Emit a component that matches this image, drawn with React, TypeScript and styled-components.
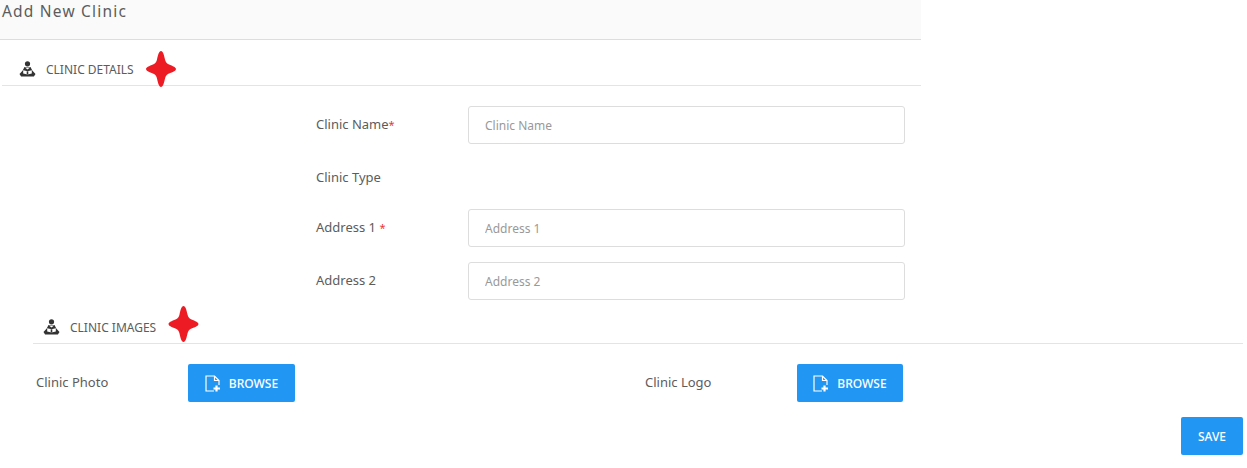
import styled, { createGlobalStyle } from "styled-components";

const GlobalStyle = createGlobalStyle`
  html, body {
    margin: 0;
    padding: 0;
    background: #fff;
  }
  body {
    font-family: "Noto Sans", "Open Sans", sans-serif;
    color: #5c5c5c;
  }
`;

function ReaderIcon() {
  return (
    <svg width="17" height="16" viewBox="0 0 17 16" fill="#333">
      <circle cx="8.500" cy="2.800" r="2.600" />
      <path d="M5.500 6h6l1.800 3.600 3.200 3.400-1.600 2.500H2.100L.5 13l3.200-3.400z" />
      <path d="M4.200 9.300l4.300 1 4.300-1v3.300l-4.300 1-4.300-1z" fill="#fff" />
      <path d="M7.700 10.300h1.600v3.200H7.700z" />
      <path d="M6 6.500l2.500 2 2.500-2z" fill="#fff" />
    </svg>
  );
}

function SparkMark({ width }: { width: number }) {
  return (
    <svg width={width} height="36" viewBox="0 0 30 36" fill="#ed1c24">
      <path d="M15 0c2 0 3 4 4 8.500.5 2.500 1.500 3.500 3 4.500 2.500 1.500 8 2.500 8 5s-5.500 3.500-8 5c-1.500 1-2.500 2-3 4.500C18 32 17 36 15 36s-3-4-4-8.500c-.5-2.500-1.500-3.500-3-4.500-2.500-1.500-8-2.500-8-5s5.500-3.500 8-5c1.500-1 2.500-2 3-4.500C12 4 13 0 15 0z" />
    </svg>
  );
}

function FileAddIcon() {
  return (
    <svg
      width="16"
      height="17"
      viewBox="0 0 16 17"
      fill="none"
      stroke="#fff"
      strokeWidth="1.200"
    >
      <path d="M9 16H1V1h8.500L14 5.500V10" />
      <path d="M9.500 1v4.500H14" />
      <path d="M11.500 10.500v6M8.500 13.500h6.500" strokeWidth="2.200" />
    </svg>
  );
}

const Page = styled.div`
  width: 1247px;
  height: 468px;
  overflow: hidden;
`;

const Main = styled.div`
  width: 921px;
`;

const TitleBar = styled.div`
  height: 39px;
  background: #fafafa;
  border-bottom: 1px solid #ddd;
  padding-left: 2px;
  font-size: 15.500px;
  line-height: 22px;
  letter-spacing: 1.200px;
  color: #5c5c5c;
`;

const SectionHead = styled.div<{ $indent: number }>`
  height: 46px;
  margin-left: 2px;
  padding-left: ${(p) => p.$indent}px;
  padding-top: 13px;
  border-bottom: 1px solid #e4e4e4;
  display: flex;
  align-items: center;
  box-sizing: border-box;
  position: relative;
`;

const SectionText = styled.span`
  margin-left: 10px;
  font-size: 12px;
  color: #5c5c5c;
`;

const MarkHolder = styled.span<{ $left: number; $top: number }>`
  position: absolute;
  left: ${(p) => p.$left}px;
  top: ${(p) => p.$top}px;
  line-height: 0;
`;

const Form = styled.div`
  padding: 20px 0 0 316px;
  display: flex;
  flex-direction: column;
  gap: 15px;
`;

const FormRow = styled.div<{ $extra?: number }>`
  display: grid;
  grid-template-columns: 152px 437px;
  align-items: center;
  height: 38px;
  margin-top: ${(p) => p.$extra ?? 0}px;
`;

const Label = styled.label`
  font-size: 13px;
  color: #5c5c5c;
  position: relative;
  top: -1px;
`;

const Required = styled.span`
  color: #e53935;
  font-size: 11px;
`;

const TextInput = styled.input`
  width: 100%;
  height: 38px;
  box-sizing: border-box;
  border: 1px solid #ddd;
  border-radius: 3px;
  padding: 0 16px;
  font-family: inherit;
  font-size: 12px;
  outline: none;

  &::placeholder {
    color: #999;
    opacity: 1;
  }
`;

const ImagesSection = styled.div`
  margin: -2px 4px 0 33px;
`;

const ImagesHead = styled(SectionHead)`
  margin-left: 0;
`;

const UploadRow = styled.div`
  display: grid;
  grid-template-columns: 152px 107px 350px 152px 106px;
  align-items: center;
  padding: 20px 0 0 3px;
`;

const BlueButton = styled.button`
  height: 38px;
  border: none;
  border-radius: 2px;
  background: #2196f3;
  color: #fff;
  font-family: inherit;
  font-size: 12px;
  font-weight: 500;
  display: flex;
  align-items: center;
  justify-content: center;
  gap: 8px;
  padding: 0;
`;

const UploadLabel = styled.span`
  font-size: 13px;
  color: #5c5c5c;
  position: relative;
  top: -1px;
`;

const Footer = styled.div`
  display: flex;
  justify-content: flex-end;
  padding-top: 15px;
`;

const SaveButton = styled(BlueButton)`
  width: 62px;
`;

export default function App() {
  return (
    <Page>
      <GlobalStyle />
      <Main>
        <TitleBar>Add New Clinic</TitleBar>
        <SectionHead $indent={17}>
          <ReaderIcon />
          <SectionText>CLINIC DETAILS</SectionText>
          <MarkHolder $left={144} $top={11}>
            <SparkMark width={30} />
          </MarkHolder>
        </SectionHead>
        <Form>
          <FormRow>
            <Label>
              Clinic Name<Required>*</Required>
            </Label>
            <TextInput placeholder="Clinic Name" />
          </FormRow>
          <FormRow>
            <Label>Clinic Type</Label>
          </FormRow>
          <FormRow $extra={-3}>
            <Label>
              Address 1 <Required>*</Required>
            </Label>
            <TextInput placeholder="Address 1" />
          </FormRow>
          <FormRow>
            <Label>Address 2</Label>
            <TextInput placeholder="Address 2" />
          </FormRow>
        </Form>
      </Main>
      <ImagesSection>
        <ImagesHead $indent={10}>
          <ReaderIcon />
          <SectionText>CLINIC IMAGES</SectionText>
          <MarkHolder $left={134} $top={8}>
            <SparkMark width={33} />
          </MarkHolder>
        </ImagesHead>
        <UploadRow>
          <UploadLabel>Clinic Photo</UploadLabel>
          <BlueButton>
            <FileAddIcon />
            BROWSE
          </BlueButton>
          <span />
          <UploadLabel>Clinic Logo</UploadLabel>
          <BlueButton>
            <FileAddIcon />
            BROWSE
          </BlueButton>
        </UploadRow>
        <Footer>
          <SaveButton>SAVE</SaveButton>
        </Footer>
      </ImagesSection>
    </Page>
  );
}
